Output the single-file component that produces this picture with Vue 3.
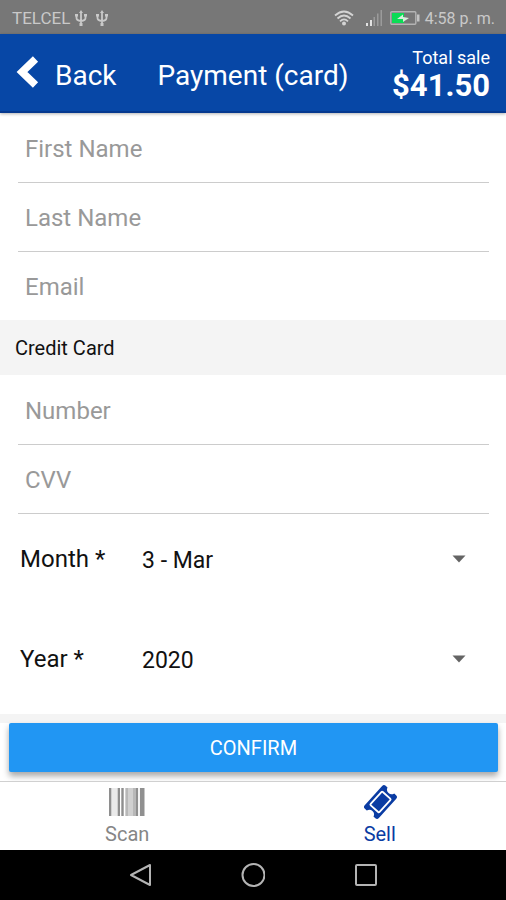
<template>
  <div class="screen">
    <!-- Status bar -->
    <div class="status">
      <span>TELCEL</span>
      <svg v-for="n in 2" :key="n" class="usb" viewBox="0 0 12 16" width="12" height="16">
        <path d="M6 2v13M1.500 4v4q0 2.500 4.500 3q4.500-.5 4.500-3V4" fill="none" stroke="#c9c9c9" stroke-width="1.800" />
        <path d="M6 0l2 3H4zM0 4h3v2.500H0zM9 4h3v2.500H9zM4.500 13h3v3h-3z" fill="#c9c9c9" />
      </svg>
      <div class="status-right">
        <svg class="wifi" viewBox="0 0 20 16" width="20" height="16">
          <g fill="none" stroke="#d4d4d4" stroke-width="1.800">
            <path d="M1 5.500Q10-2.500 19 5.500" />
            <path d="M3.500 8.500Q10 2.500 16.500 8.500" />
            <path d="M6 11.300Q10 7.500 14 11.300" />
          </g>
          <circle cx="10" cy="13.500" r="2" fill="#d4d4d4" />
        </svg>
        <svg class="signal" viewBox="0 0 16 16" width="16" height="16">
          <path d="M0 13h2v3H0zM4 10h2v6H4z" fill="#e2e2e2" />
          <path d="M7.500 7h1.500v9H7.500zM11 3.500h1.500V16H11zM14.500 0H16v16h-1.500z" fill="#9b9b9b" />
        </svg>
        <svg viewBox="0 0 30 14" width="30" height="14">
          <rect x=".8" y=".8" width="25" height="12.400" rx="1" fill="none" stroke="#b4b4b4" stroke-width="1.400" />
          <rect x="2" y="2" width="12" height="10" fill="#0bdc55" />
          <path d="M27 3.500h2.500v7H27z" fill="#c4c4c4" />
          <path d="M7 8l6-4.500V6l6 1-6 4V8z" fill="#d8ecdc" />
        </svg>
        <span class="clock">4:58 p. m.</span>
      </div>
    </div>

    <header class="header">
      <button type="button" class="back">
        <svg viewBox="0 0 24 36" width="24" height="36">
          <path d="M19.500 3L6 16l13.500 13" fill="none" stroke="#fff" stroke-width="7.500" />
        </svg>
        <span>Back</span>
      </button>
      <h1 class="title">Payment (card)</h1>
      <div class="total">
        <span class="total-label">Total sale</span>
        <strong class="total-value">$41.50</strong>
      </div>
    </header>

    <form class="form" @submit.prevent>
      <div class="fields">
        <input
          v-for="f in personFields"
          :key="f.key"
          v-model="form[f.key]"
          class="field"
          :type="f.type"
          :placeholder="f.label"
          :aria-label="f.label"
        />
      </div>

      <h2 class="section">Credit Card</h2>

      <div class="fields card-fields">
        <input
          v-for="f in cardFields"
          :key="f.key"
          v-model="form[f.key]"
          class="field"
          :type="f.type"
          :placeholder="f.label"
          :aria-label="f.label"
        />
      </div>

      <div class="pickers">
        <div class="picker">
          <label for="month">Month *</label>
          <div class="select">
            <select id="month" v-model="form.month">
              <option v-for="(m, i) in months" :key="m" :value="i + 1">{{ i + 1 }} - {{ m }}</option>
            </select>
            <svg class="caret" viewBox="0 0 14 8" width="14" height="8"><path d="M.5.5h13L7 7.500z" fill="#646464" /></svg>
          </div>
        </div>
        <div class="picker">
          <label for="year">Year *</label>
          <div class="select">
            <select id="year" v-model="form.year">
              <option v-for="y in years" :key="y" :value="y">{{ y }}</option>
            </select>
            <svg class="caret" viewBox="0 0 14 8" width="14" height="8"><path d="M.5.5h13L7 7.500z" fill="#646464" /></svg>
          </div>
        </div>
      </div>

      <div class="actions">
        <button type="submit" class="confirm">CONFIRM</button>
      </div>
    </form>

    <!-- Tabs -->
    <nav class="tabs">
      <button type="button" class="tab" :class="{ active: tab === 'scan' }" @click="tab = 'scan'">
        <svg viewBox="0 0 36 28" width="36" height="28">
          <rect x="1" width="34" height="28" fill="#d0d0d0" />
          <path d="M3 0h5v28H3z" fill="#eaeaea" />
          <path d="M11 0h1v28h-1zM15 0h1v28h-1z" fill="#fff" />
          <path d="M0 0h2v28H0zM9 0h2v28H9zM12.500 0h2v28h-2z" fill="#8e8e8e" />
          <path d="M17 0h2v28h-2zM24 0h3v28h-3z" fill="#b8b8b8" />
          <path d="M27 0h2v28h-2zM31 0h4.500v28H31z" fill="#909090" />
          <path d="M29 0h2v28h-2z" fill="#f4f4f4" />
        </svg>
        <span>Scan</span>
      </button>
      <button type="button" class="tab" :class="{ active: tab === 'sell' }" @click="tab = 'sell'">
        <svg viewBox="0 0 36 34" width="36" height="34">
          <g transform="translate(18.500 17) rotate(-48)">
            <path
              d="M-13-9.500H13Q15.500-9.500 15.500-7V-4.500Q12-3.500 12 0T15.500 4.500V7Q15.500 9.500 13 9.500H-13Q-15.500 9.500-15.500 7V4.500Q-12 3.500-12 0T-15.500-4.500V-7Q-15.500-9.500-13-9.500z"
              fill="#0a3ca3"
            />
            <rect x="-9" y="-6" width="18" height="12" rx="1" fill="none" stroke="#fff" stroke-width="1.800" />
          </g>
        </svg>
        <span>Sell</span>
      </button>
    </nav>

    <!-- System navigation -->
    <div class="system">
      <button type="button" aria-label="Back">
        <svg viewBox="0 0 24 24" width="24" height="24">
          <path d="M22 2v20L3 12z" fill="none" stroke="#b4b4b4" stroke-width="2" stroke-linejoin="round" />
        </svg>
      </button>
      <button type="button" aria-label="Home">
        <svg viewBox="0 0 24 24" width="24" height="24">
          <circle cx="12.500" cy="12" r="11" fill="none" stroke="#b4b4b4" stroke-width="2" />
        </svg>
      </button>
      <button type="button" aria-label="Recent apps">
        <svg viewBox="0 0 24 24" width="24" height="24">
          <rect x="2" y="2" width="20" height="20" rx="1" fill="none" stroke="#b4b4b4" stroke-width="2" />
        </svg>
      </button>
    </div>
  </div>
</template>

<script setup>
import { ref, reactive } from "vue";

const tab = ref("sell");

const form = reactive({
  firstName: "",
  lastName: "",
  email: "",
  number: "",
  cvv: "",
  month: 3,
  year: 2020,
});

const personFields = [
  { key: "firstName", label: "First Name", type: "text" },
  { key: "lastName", label: "Last Name", type: "text" },
  { key: "email", label: "Email", type: "email" },
];
const cardFields = [
  { key: "number", label: "Number", type: "text" },
  { key: "cvv", label: "CVV", type: "text" },
];

const months = ["Jan", "Feb", "Mar", "Apr", "May", "Jun", "Jul", "Aug", "Sep", "Oct", "Nov", "Dec"];
const years = Array.from({ length: 10 }, (_, i) => 2020 + i);
</script>

<style>
body {
  margin: 0;
  background: #fff;
}
</style>

<style scoped>
.screen {
  display: flex;
  flex-direction: column;
  min-height: 100vh;
  font-family: Roboto, "Liberation Sans", sans-serif;
  color: #111;
}
.screen * {
  box-sizing: border-box;
}
button {
  padding: 0;
  border: none;
  background: none;
  font-family: inherit;
  color: inherit;
  cursor: pointer;
}
svg {
  display: block;
  flex: none;
}

/* Status bar */
.status {
  display: flex;
  align-items: center;
  height: 34px;
  padding: 2px 11px 0 12px;
  background: #777;
  color: #c9c9c9;
  font-size: 17px;
}
.usb {
  margin-left: 5px;
}
.usb + .usb {
  margin-left: 9px;
}
.status-right {
  display: flex;
  align-items: center;
  margin-left: auto;
}
.wifi {
  margin-right: 12px;
}
.signal {
  margin-right: 8px;
}
.clock {
  margin-left: 5px;
  font-size: 16px;
}

/* Header */
.header {
  position: relative;
  display: flex;
  align-items: center;
  height: 79px;
  padding: 2px 16px 0;
  background: #0747a6;
  border-bottom: 2px solid #06398f;
  box-shadow: 0 1px 3px rgba(0, 0, 0, 0.3);
  color: #fff;
}
.back {
  display: flex;
  align-items: center;
  gap: 15px;
  font-size: 28px;
}
.back span,
.title {
  padding-top: 4px;
}
.title {
  margin: 0 0 0 41px;
  font-size: 28px;
  font-weight: 400;
}
.total {
  display: flex;
  flex-direction: column;
  align-items: flex-end;
  margin-left: auto;
}
.total-label {
  font-size: 18px;
  line-height: 24px;
}
.total-value {
  font-size: 31px;
  line-height: 32px;
}

/* Form */
.form {
  display: flex;
  flex: 1;
  flex-direction: column;
}
.fields {
  display: flex;
  flex-direction: column;
  padding: 1px 17px 0 18px;
}
.field {
  width: 100%;
  height: 69px;
  padding: 2px 7px 0;
  border: none;
  border-bottom: 1px solid #ccc;
  border-radius: 0;
  outline: none;
  background: none;
  font-family: inherit;
  font-size: 24px;
  color: #111;
}
.field::placeholder {
  color: #999;
  opacity: 1;
}
.fields:not(.card-fields) .field:last-child {
  height: 68px;
  border-bottom: none;
}
.section {
  margin: 0;
  padding: 2px 15px 0;
  background: #f4f4f4;
  font-size: 20px;
  font-weight: 400;
  line-height: 53px;
}
.pickers {
  flex: 1;
}
.picker {
  display: flex;
  align-items: center;
  height: 100px;
  padding: 0 40px 10px 20px;
  font-size: 24px;
}
.picker label {
  width: 122px;
}
.select {
  display: flex;
  flex: 1;
  align-items: center;
}
.select select {
  flex: 1;
  height: 48px;
  margin-right: -14px;
  padding: 2px 14px 0 0;
  border: none;
  outline: none;
  appearance: none;
  background: none;
  font-family: inherit;
  font-size: 23px;
  color: inherit;
}
.caret {
  pointer-events: none;
}
.actions {
  padding: 0 8px 9px 9px;
  border-top: 9px solid #f4f4f4;
  background: #fff;
}
.confirm {
  display: block;
  width: 100%;
  height: 49px;
  border-radius: 2px;
  background: #2196f3;
  box-shadow: 0 4px 6px rgba(0, 0, 0, 0.35);
  color: #fff;
  font-size: 20px;
}

/* Tabs */
.tabs {
  position: relative;
  display: flex;
  height: 69px;
  padding-left: 1px;
  border-top: 1px solid #d0d0d0;
  background: #fff;
}
.tab {
  display: flex;
  flex: 1;
  flex-direction: column;
  align-items: center;
  justify-content: flex-end;
  padding-bottom: 4px;
  font-size: 20px;
  line-height: 24px;
  color: #868686;
}
.tab svg {
  margin: auto 0;
}
.tab.active {
  color: #0a3ca3;
}

/* System navigation */
.system {
  display: flex;
  align-items: center;
  justify-content: center;
  gap: 89px;
  height: 50px;
  background: #000;
}
</style>
